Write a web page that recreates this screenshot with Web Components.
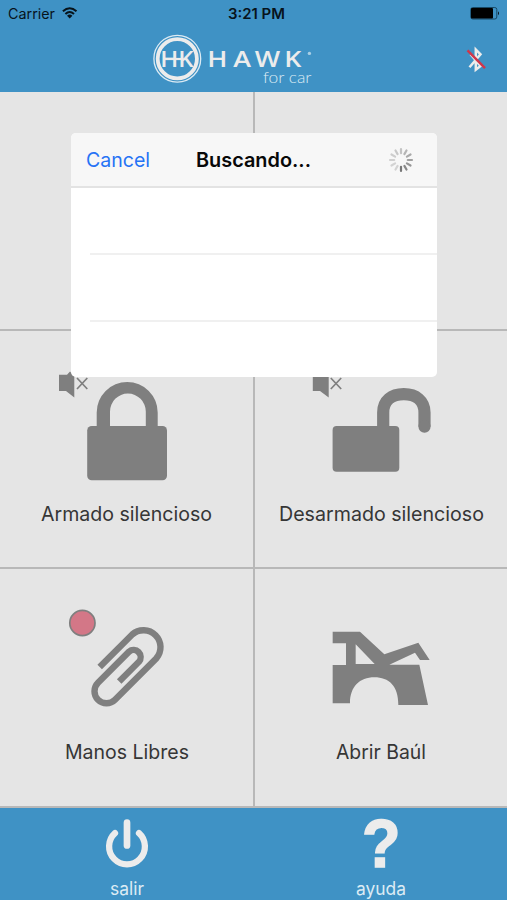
<!DOCTYPE html>
<html lang="es">
<head>
<meta charset="utf-8">
<title>Hawk for car</title>
<style>
html,body{margin:0;height:100%;overflow:hidden}
body{font-family:Inter,"Liberation Sans",sans-serif;background:#e5e5e5}
</style>
</head>
<body>
<hawk-app></hawk-app>
<script>
const define=(name,html)=>customElements.define(name,class extends HTMLElement{
  constructor(){super();const t=document.createElement('template');t.innerHTML=html;
    this.attachShadow({mode:'open'}).append(t.content.cloneNode(true));}
});

/* One line of text set to an exact width. */
customElements.define('fit-text',class extends HTMLElement{
  connectedCallback(){
    if(this.shadowRoot)return;
    const w=+this.getAttribute('w'),s=+this.getAttribute('size'),h=Math.ceil(s*1.3);
    this.attachShadow({mode:'open'}).innerHTML=`<style>:host{display:block;width:${w}px;height:${h}px}svg{display:block;overflow:visible}</style>
    <svg width="${w}" height="${h}"><text x="0" y="${s}" font-size="${s}" fill="currentColor" textLength="${w}" lengthAdjust="spacingAndGlyphs">${this.getAttribute('text')}</text></svg>`;
  }
});

define('status-bar',`<style>
:host{display:grid;grid-template-columns:1fr auto 1fr;height:28px;color:#07131b;padding:0 7px 0 8px;box-sizing:border-box}
.l{display:flex;gap:7px}.t{font-weight:600;padding-left:4px}.r{display:flex;justify-content:flex-end}
fit-text{padding-top:5px}svg{display:block}
</style>
<div class="l"><fit-text text="Carrier" w="47" size="14"></fit-text>
<svg width="16" height="28" viewBox="62 0 16 28" fill="none" stroke="#07131b"><path d="M62.9 11.2Q69.7 5.2 76.5 11.2" stroke-width="2"/><path d="M65.4 14Q69.7 10 74 14" stroke-width="2"/><path d="M67 15.8Q69.7 13.4 72.4 15.8L69.7 18.6Z" fill="#07131b" stroke="none"/></svg></div>
<div class="t"><fit-text text="3:21 PM" w="57" size="14"></fit-text></div>
<div class="r"><svg width="30" height="28" viewBox="470 0 30 28"><rect x="470.8" y="7.5" width="26" height="11.5" rx="2" fill="none" stroke="#174966"/><rect x="471" y="8" width="22" height="10.5" rx="1" fill="#000"/><path d="M498 11.2Q500 13.2 498 15.2Z" fill="#07131b"/></svg></div>`);

define('brand-bar',`<style>:host{display:grid;grid-template-columns:150px 164px 1fr;height:64px}svg{display:block}.bt{justify-self:end;padding-right:19px}</style>
<span></span>
<svg width="164" height="64" viewBox="150 28 164 64" fill="#ececec">
<circle cx="177.3" cy="58.7" r="23.4" fill="none" stroke="#dcebf4" stroke-width="1.3"/>
<circle cx="177.3" cy="58.7" r="19.6" fill="none" stroke="#ececec" stroke-width="3.8"/>
<g font-family="Open Sans" font-size="22"><text transform="translate(160.3 66.6) scale(.98 1)" font-size="21" textLength="34" lengthAdjust="spacingAndGlyphs" font-weight="600">HK</text>
<text transform="translate(0 67) scale(1.22 1)" x="169.8 191.2 208.9 233" font-weight="650">HAWK</text></g>
<rect x="163" y="57.9" width="18" height="2.2"/>
<circle cx="309.4" cy="53.4" r="1.7" fill="#a9cfe5"/>
<text x="263" y="82.7" font-family="Lato" font-weight="300" font-size="16" textLength="48.5" lengthAdjust="spacingAndGlyphs" fill="#dcebf4">for car</text>
</svg>
<svg class="bt" width="22" height="64" viewBox="466 28 22 64" fill="none"><path d="M469.5 67.3L480.5 54.3L475.8 49.5V69.7L480.5 66L470.5 54.3" stroke="#ececec" stroke-width="2.5"/><path d="M467.5 50.3L485 68.2" stroke="#d0364b" stroke-width="2.4"/></svg>`);

define('action-tile',`<style>
:host{display:flex;flex-direction:column;align-items:center;background:#e5e5e5;color:#363636;overflow:hidden}
::slotted(svg){display:block;flex:none}
</style><slot name="icon"></slot><slot></slot>`);

define('tab-item',`<style>:host{display:flex;flex-direction:column;align-items:center;color:#dcebf4}::slotted(svg){display:block;flex:none;overflow:visible}</style><slot name="icon"></slot><slot></slot>`);

define('search-dialog',`<style>
:host{display:block;width:366px;height:244px;background:#fff;border-radius:5px;overflow:hidden}
header{display:flex;align-items:center;height:53px;background:#f7f7f7;border-bottom:2px solid #e3e3e3;padding:0 23px 0 15px;width:328px}
.c{color:#2673f5}.t{color:#080808;font-weight:600;margin-left:46px}.s{margin-left:auto}
.row{height:65px;margin-left:19px;border-bottom:2px solid #f0f0f0}
</style><header><fit-text class="c" text="Cancel" w="64" size="20"></fit-text><fit-text class="t" text="Buscando..." w="115" size="20"></fit-text><svg class="s" width="26" height="26" viewBox="-13 -13 26 26" stroke-width="2.2" stroke-linecap="round">${
Array.from({length:12},(_,i)=>`<path d="M0 -6.8V-11" transform="rotate(${i*30})" stroke="${['#c3c3c3','#b5b5b5','#aaa','#a0a0a0','#969696','#888','#777','#d3d3d3','#d3d3d3','#d0d0d0','#cdcdcd','#c8c8c8'][i]}"/>`).join('')}</svg></header><div class="row"></div><div class="row"></div>`);

define('hawk-app',`<style>
:host{display:grid;grid-template-rows:92px 716px 92px;width:507px;height:900px;position:relative}
.head,.foot{background:#3f92c5}
.grid{display:grid;grid-template-columns:253px 252px;grid-template-rows:237px 236px 237px;gap:2px;background:#b8b8b8;padding-bottom:2px;box-sizing:border-box}
.foot{display:grid;grid-template-columns:254px 253px}
search-dialog{position:absolute;left:71px;top:133px}
</style>
<div class="head"><status-bar></status-bar><brand-bar></brand-bar></div>
<div class="grid">
<action-tile></action-tile><action-tile></action-tile>
<action-tile><svg slot="icon" width="253" height="170" viewBox="0 331 253 170" fill="#7f7f7f">
<path d="M59 374.7H67L70 371.5L74.3 376V397.5L66 391H59Z"/><path d="M77 378L87.3 389M87.3 378L77 389" stroke="#7f7f7f" stroke-width="1.7"/>
<rect x="87.2" y="426" width="79.8" height="54.2" rx="4.5"/><path d="M96.7 428V412.5A30.5 30.5 0 0 1 157.7 412.5V428H145.8V411.5A17.9 17.9 0 0 0 110 411.5V428Z"/></svg>
<fit-text text="Armado silencioso" w="171" size="20"></fit-text></action-tile>
<action-tile><svg slot="icon" width="252" height="170" viewBox="255 331 252 170" fill="#7f7f7f">
<path d="M312.8 374.7H321L324 371.5L328.7 376V397.5L320 391H312.8Z"/><path d="M330.8 378L341.2 389M341.2 378L330.8 389" stroke="#7f7f7f" stroke-width="1.7"/>
<rect x="332.6" y="426" width="66.7" height="45.7" rx="4"/><path d="M383.2 430V412.5C383.2 400.5 391.5 394.2 403.8 394.2S424.5 401 424.5 412.5V426.6" fill="none" stroke="#7f7f7f" stroke-width="12.2"/><circle cx="424.5" cy="426.6" r="6.1"/></svg>
<fit-text text="Desarmado silencioso" w="205" size="20"></fit-text></action-tile>
<action-tile><svg slot="icon" width="253" height="170" viewBox="0 569 253 170" fill="none">
<circle cx="82.4" cy="623" r="12.6" fill="#d37787" stroke="#7f7f7f" stroke-width="1.7"/>
<path d="M99.7 667L132.2 634.5A17 17 0 0 1 156.2 658.5L115 699.7A12 12 0 0 1 98 682.7L129 651.7A7.1 7.1 0 0 1 139 661.7L119.2 681.5" stroke="#7f7f7f" stroke-width="6.4"/></svg>
<fit-text text="Manos Libres" w="124" size="20"></fit-text></action-tile>
<action-tile><svg slot="icon" width="252" height="170" viewBox="255 569 252 170" fill="#7f7f7f">
<path transform="translate(310 610) scale(.33333)" fill-rule="evenodd" d="M68 65H150L223 133L325 98L359 150H330L315 128L238 164H328L354 285H265C265 228 237 202 193 202C149 202 120 230 120 280H68V165H108V100H68ZM137 103V162H194Z"/></svg>
<fit-text text="Abrir Baúl" w="90" size="20"></fit-text></action-tile>
</div>
<div class="foot">
<tab-item><svg slot="icon" width="254" height="69" viewBox="0 808 254 69" fill="none" stroke="#ececec" stroke-linecap="round"><path d="M115 833.2A17.9 17.9 0 1 0 139 833.2" stroke-width="6.3"/><path d="M127 822.7V845.5" stroke-width="6.7"/></svg><fit-text text="salir" w="34" size="18"></fit-text></tab-item>
<tab-item><svg slot="icon" width="253" height="69" viewBox="254 808 253 69" fill="#ececec"><text x="362" y="867.4" font-family="Liberation Sans" font-weight="700" font-size="68" textLength="38.5" lengthAdjust="spacingAndGlyphs" stroke="#ececec" stroke-width="1.6">?</text></svg><fit-text text="ayuda" w="50" size="18"></fit-text></tab-item>
</div>
<search-dialog></search-dialog>`);
</script>
</body>
</html>
